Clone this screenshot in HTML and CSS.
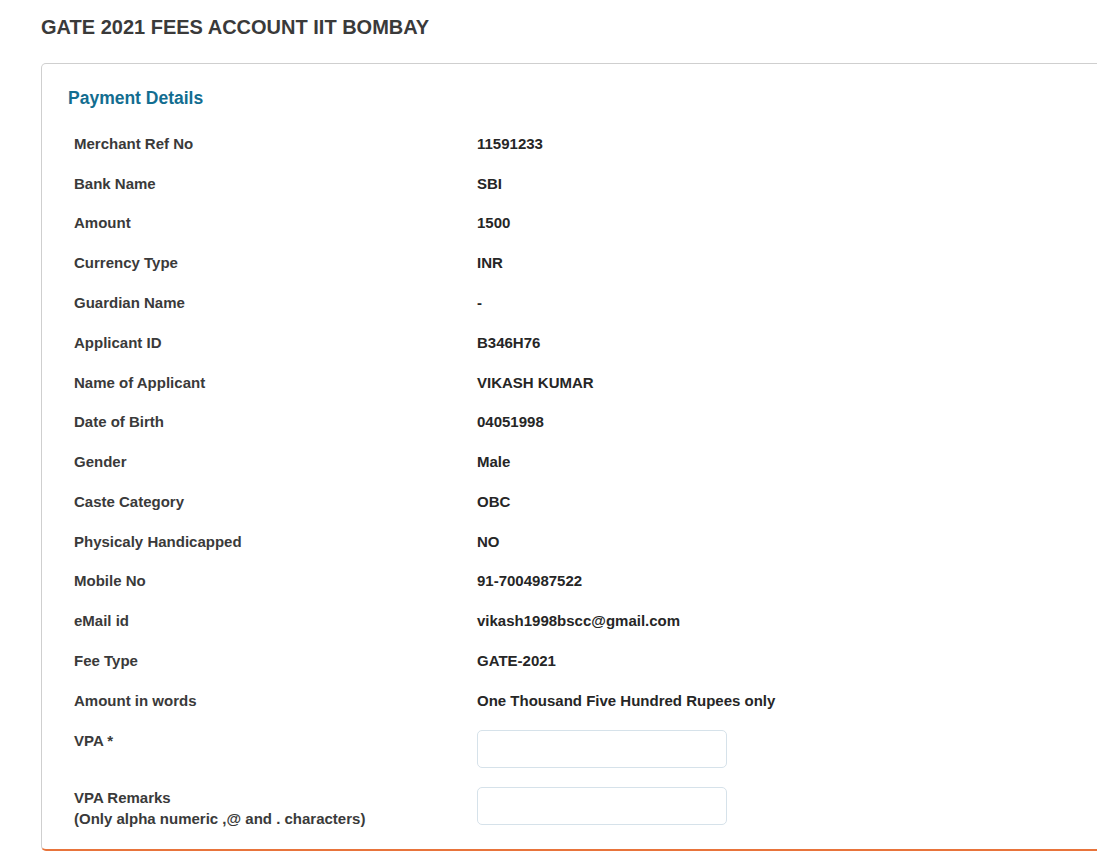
FILE: index.html
```html
<!DOCTYPE html>
<html>
<head>
<meta charset="utf-8">
<link rel="stylesheet" href="styles.css">
</head>
<body>
<div class="page">
  <h1 class="title">GATE 2021 FEES ACCOUNT IIT BOMBAY</h1>
  <div class="card">
    <h2 class="card-title">Payment Details</h2>
    <div class="details">
      <div class="label">Merchant Ref No</div><div class="value">11591233</div>
      <div class="label">Bank Name</div><div class="value">SBI</div>
      <div class="label">Amount</div><div class="value">1500</div>
      <div class="label">Currency Type</div><div class="value">INR</div>
      <div class="label">Guardian Name</div><div class="value">-</div>
      <div class="label">Applicant ID</div><div class="value">B346H76</div>
      <div class="label">Name of Applicant</div><div class="value">VIKASH KUMAR</div>
      <div class="label">Date of Birth</div><div class="value">04051998</div>
      <div class="label">Gender</div><div class="value">Male</div>
      <div class="label">Caste Category</div><div class="value">OBC</div>
      <div class="label">Physicaly Handicapped</div><div class="value">NO</div>
      <div class="label">Mobile No</div><div class="value">91-7004987522</div>
      <div class="label">eMail id</div><div class="value">vikash1998bscc@gmail.com</div>
      <div class="label">Fee Type</div><div class="value">GATE-2021</div>
      <div class="label">Amount in words</div><div class="value">One Thousand Five Hundred Rupees only</div>
      <div class="label">VPA *</div><div class="value input-cell"><input class="field" type="text"></div>
      <div class="label label-multi">VPA Remarks<br>(Only alpha numeric ,@ and . characters)</div><div class="value input-cell"><input class="field" type="text"></div>
    </div>
  </div>
</div>
</body>
</html>
```

FILE: styles.css
```css
html, body {
  margin: 0;
  padding: 0;
  overflow: hidden;
  background: #fff;
}
body {
  font-family: "Liberation Sans", Arial, sans-serif;
  color: #333;
}
.page {
  padding: 14px 0 0 41px;
}
.title {
  margin: 0;
  font-size: 20px;
  line-height: 26px;
  font-weight: bold;
  color: #3a3a3a;
}
.card {
  margin-top: 23px;
  margin-right: -6px;
  border: 1px solid #cfcfcf;
  border-bottom: 2px solid #e8743b;
  border-radius: 5px;
  padding: 23px 0 10px 26px;
}
.card-title {
  margin: 0 0 15px 0;
  font-size: 17.5px;
  line-height: 22px;
  font-weight: bold;
  color: #126d90;
}
.details {
  display: grid;
  grid-template-columns: 403px 1fr;
  margin-left: 6px;
}
.label, .value {
  font-size: 15px;
  font-weight: bold;
  line-height: 20px;
  padding: 9.9px 0;
}
.label {
  color: #3a3a3a;
}
.value {
  color: #262626;
}
.label-multi {
  line-height: 21px;
  padding-top: 9px;
}
.input-cell {
  padding-top: 9px;
}
.field {
  display: block;
  box-sizing: border-box;
  width: 250px;
  height: 38px;
  margin: 0;
  border: 1px solid #d6e2ea;
  border-radius: 5px;
  background: #fff;
  outline: none;
}
```
